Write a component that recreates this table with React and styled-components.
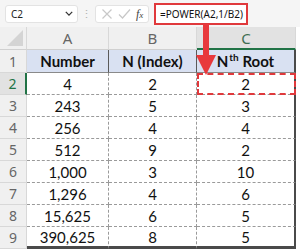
import React from "react";
import styled, { createGlobalStyle } from "styled-components";

const GlobalStyle = createGlobalStyle`
  html, body {
    margin: 0;
    padding: 0;
    background: #ffffff;
  }
  body {
    width: 300px;
    height: 252px;
    overflow: hidden;
    font-family: "Lato", "Noto Sans", sans-serif;
  }
`;

const ROWS = [
  { n: "4", idx: "2", root: "2" },
  { n: "243", idx: "5", root: "3" },
  { n: "256", idx: "4", root: "4" },
  { n: "512", idx: "9", root: "2" },
  { n: "1,000", idx: "3", root: "10" },
  { n: "1,296", idx: "4", root: "6" },
  { n: "15,625", idx: "6", root: "5" },
  { n: "390,625", idx: "8", root: "5" },
];

function App() {
  return (
    <Sheet>
      <GlobalStyle />
      <FormulaBar>
        <NameBox>
          <span>C2</span>
          <Chevron viewBox="0 0 10 6">
            <path d="M1 1 L5 5 L9 1" fill="none" stroke="#333" strokeWidth="1.6" />
          </Chevron>
        </NameBox>
        <Dots>⋮</Dots>
        <ActionBox>
          <svg width="12" height="12" viewBox="0 0 12 12">
            <path d="M1.5 1.5 L10.5 10.5 M10.5 1.5 L1.5 10.5" stroke="#c8c8c8" strokeWidth="1.2" />
          </svg>
          <svg width="13" height="12" viewBox="0 0 13 12">
            <path d="M1 6.5 L4.5 10 L12 1.5" fill="none" stroke="#c8c8c8" strokeWidth="1.2" />
          </svg>
          <Fx>
            f<sub>x</sub>
          </Fx>
        </ActionBox>
        <FormulaBox>=POWER(A2,1/B2)</FormulaBox>
      </FormulaBar>

      <Grid>
        <Corner>
          <svg width="16" height="16" viewBox="0 0 16 16">
            <path d="M16 0 L16 16 L0 16 Z" fill="#d4d4d4" />
          </svg>
        </Corner>
        <ColHead>A</ColHead>
        <ColHead>B</ColHead>
        <ColHead $active>C</ColHead>
        <Spare />

        <RowHead>1</RowHead>
        <HeadCell>Number</HeadCell>
        <HeadCell>N (Index)</HeadCell>
        <HeadCell $last>
          <span>
            N<sup>th</sup> Root
          </span>
        </HeadCell>
        <Spare />

        {ROWS.map((r, i) => {
          const last = i === ROWS.length - 1;
          return (
            <React.Fragment key={i}>
              <RowHead $active={i === 0}>{i + 2}</RowHead>
              <Cell $bottom={last}>{r.n}</Cell>
              <Cell $bottom={last}>{r.idx}</Cell>
              <Cell $bottom={last} $last $selected={i === 0}>
                {r.root}
              </Cell>
              <Spare />
            </React.Fragment>
          );
        })}
      </Grid>

      <Arrow width="22" height="52" viewBox="0 0 22 52">
        <rect x="8" y="0" width="6" height="32" fill="#e8393c" />
        <path d="M1 31 L21 31 L11 51 Z" fill="#e8393c" />
      </Arrow>
    </Sheet>
  );
}

export default App;

const Sheet = styled.div`
  position: relative;
  width: 300px;
  height: 252px;
  background: #ffffff;
`;

const FormulaBar = styled.div`
  display: flex;
  align-items: center;
  height: 27px;
  padding: 0 0 0 5px;
  background: #f5f5f5;
  box-sizing: border-box;
`;

const NameBox = styled.div`
  display: flex;
  align-items: center;
  justify-content: space-between;
  width: 73px;
  height: 18px;
  box-sizing: border-box;
  padding: 0 4px 0 5px;
  background: #ffffff;
  border: 1px solid #e3e3e3;
  border-radius: 3px;
  font-family: "Noto Sans", sans-serif;
  font-size: 10px;
  color: #222;
`;

const Chevron = styled.svg`
  width: 8px;
  height: 5px;
`;

const Dots = styled.div`
  width: 17px;
  text-align: center;
  color: #b0b0b0;
  font-size: 11px;
  line-height: 1;
`;

const ActionBox = styled.div`
  display: flex;
  align-items: center;
  gap: 5px;
  width: 54px;
  height: 18px;
  box-sizing: border-box;
  padding: 0 3px 0 5px;
  background: #ffffff;
  border: 1px solid #e3e3e3;
  border-radius: 3px;
`;

const Fx = styled.span`
  font-family: "Liberation Serif", serif;
  font-style: italic;
  font-size: 12px;
  color: #444;
  line-height: 1;
  sub {
    font-size: 9px;
    vertical-align: baseline;
  }
`;

const FormulaBox = styled.div`
  display: flex;
  align-items: center;
  margin-left: 5px;
  width: 94px;
  height: 22px;
  box-sizing: border-box;
  padding-left: 4px;
  background: #ffffff;
  border: 2px solid #e0393c;
  font-family: "Noto Sans", sans-serif;
  font-size: 10px;
  color: #111;
`;

const Grid = styled.div`
  display: grid;
  grid-template-columns: 27px 82px 88px 99px 4px;
  grid-template-rows: 23px 23px repeat(8, 22px);
  margin-top: 0px;
`;

const Corner = styled.div`
  display: flex;
  align-items: flex-end;
  justify-content: flex-end;
  padding: 0 3px 3px 0;
  background: #f0f0f0;
  border-right: 1px solid #d8d8d8;
  border-bottom: 1px solid #d0d0d0;
`;

const ColHead = styled.div`
  display: flex;
  align-items: center;
  justify-content: center;
  font-family: "Noto Sans", sans-serif;
  font-size: 15px;
  color: ${(p) => (p.$active ? "#3f6e52" : "#666")};
  background: ${(p) => (p.$active ? "#e2e2e2" : "#f0f0f0")};
  border-right: 1px solid #d8d8d8;
  border-bottom: ${(p) => (p.$active ? "2px solid #217346" : "1px solid #d0d0d0")};
  box-sizing: border-box;
`;

const Spare = styled.div`
  background: #ffffff;
`;

const RowHead = styled.div`
  display: flex;
  align-items: center;
  justify-content: center;
  font-family: "Noto Sans", sans-serif;
  font-size: 14px;
  color: ${(p) => (p.$active ? "#217346" : "#666")};
  background: ${(p) => (p.$active ? "#e2e2e2" : "#f0f0f0")};
  border-right: ${(p) => (p.$active ? "2px solid #217346" : "1px solid #d8d8d8")};
  border-bottom: 1px solid #d8d8d8;
  box-sizing: border-box;
`;

const HeadCell = styled.div`
  display: flex;
  align-items: center;
  justify-content: center;
  background: #d9e1f2;
  font-weight: 700;
  font-size: 15px;
  color: #111;
  border-right: ${(p) => (p.$last ? "2px solid #4a4a4a" : "1px solid #5a5a5a")};
  border-bottom: 1px solid #8a8a8a;
  box-sizing: border-box;
  sup {
    font-size: 10px;
    line-height: 0;
    vertical-align: 6px;
    margin-left: 1px;
  }
`;

const Cell = styled.div`
  display: flex;
  align-items: center;
  justify-content: center;
  font-size: 15px;
  color: #111;
  background: #ffffff;
  box-sizing: border-box;
  border-right: ${(p) => (p.$last ? "2px solid #4a4a4a" : "1px dashed #9a9a9a")};
  border-bottom: ${(p) => (p.$bottom ? "3px solid #4a4a4a" : "1px dashed #9a9a9a")};
  outline: ${(p) => (p.$selected ? "2px dashed #e0393c" : "none")};
  outline-offset: -2px;
`;

const Arrow = styled.svg`
  position: absolute;
  left: 195px;
  top: 24px;
`;
